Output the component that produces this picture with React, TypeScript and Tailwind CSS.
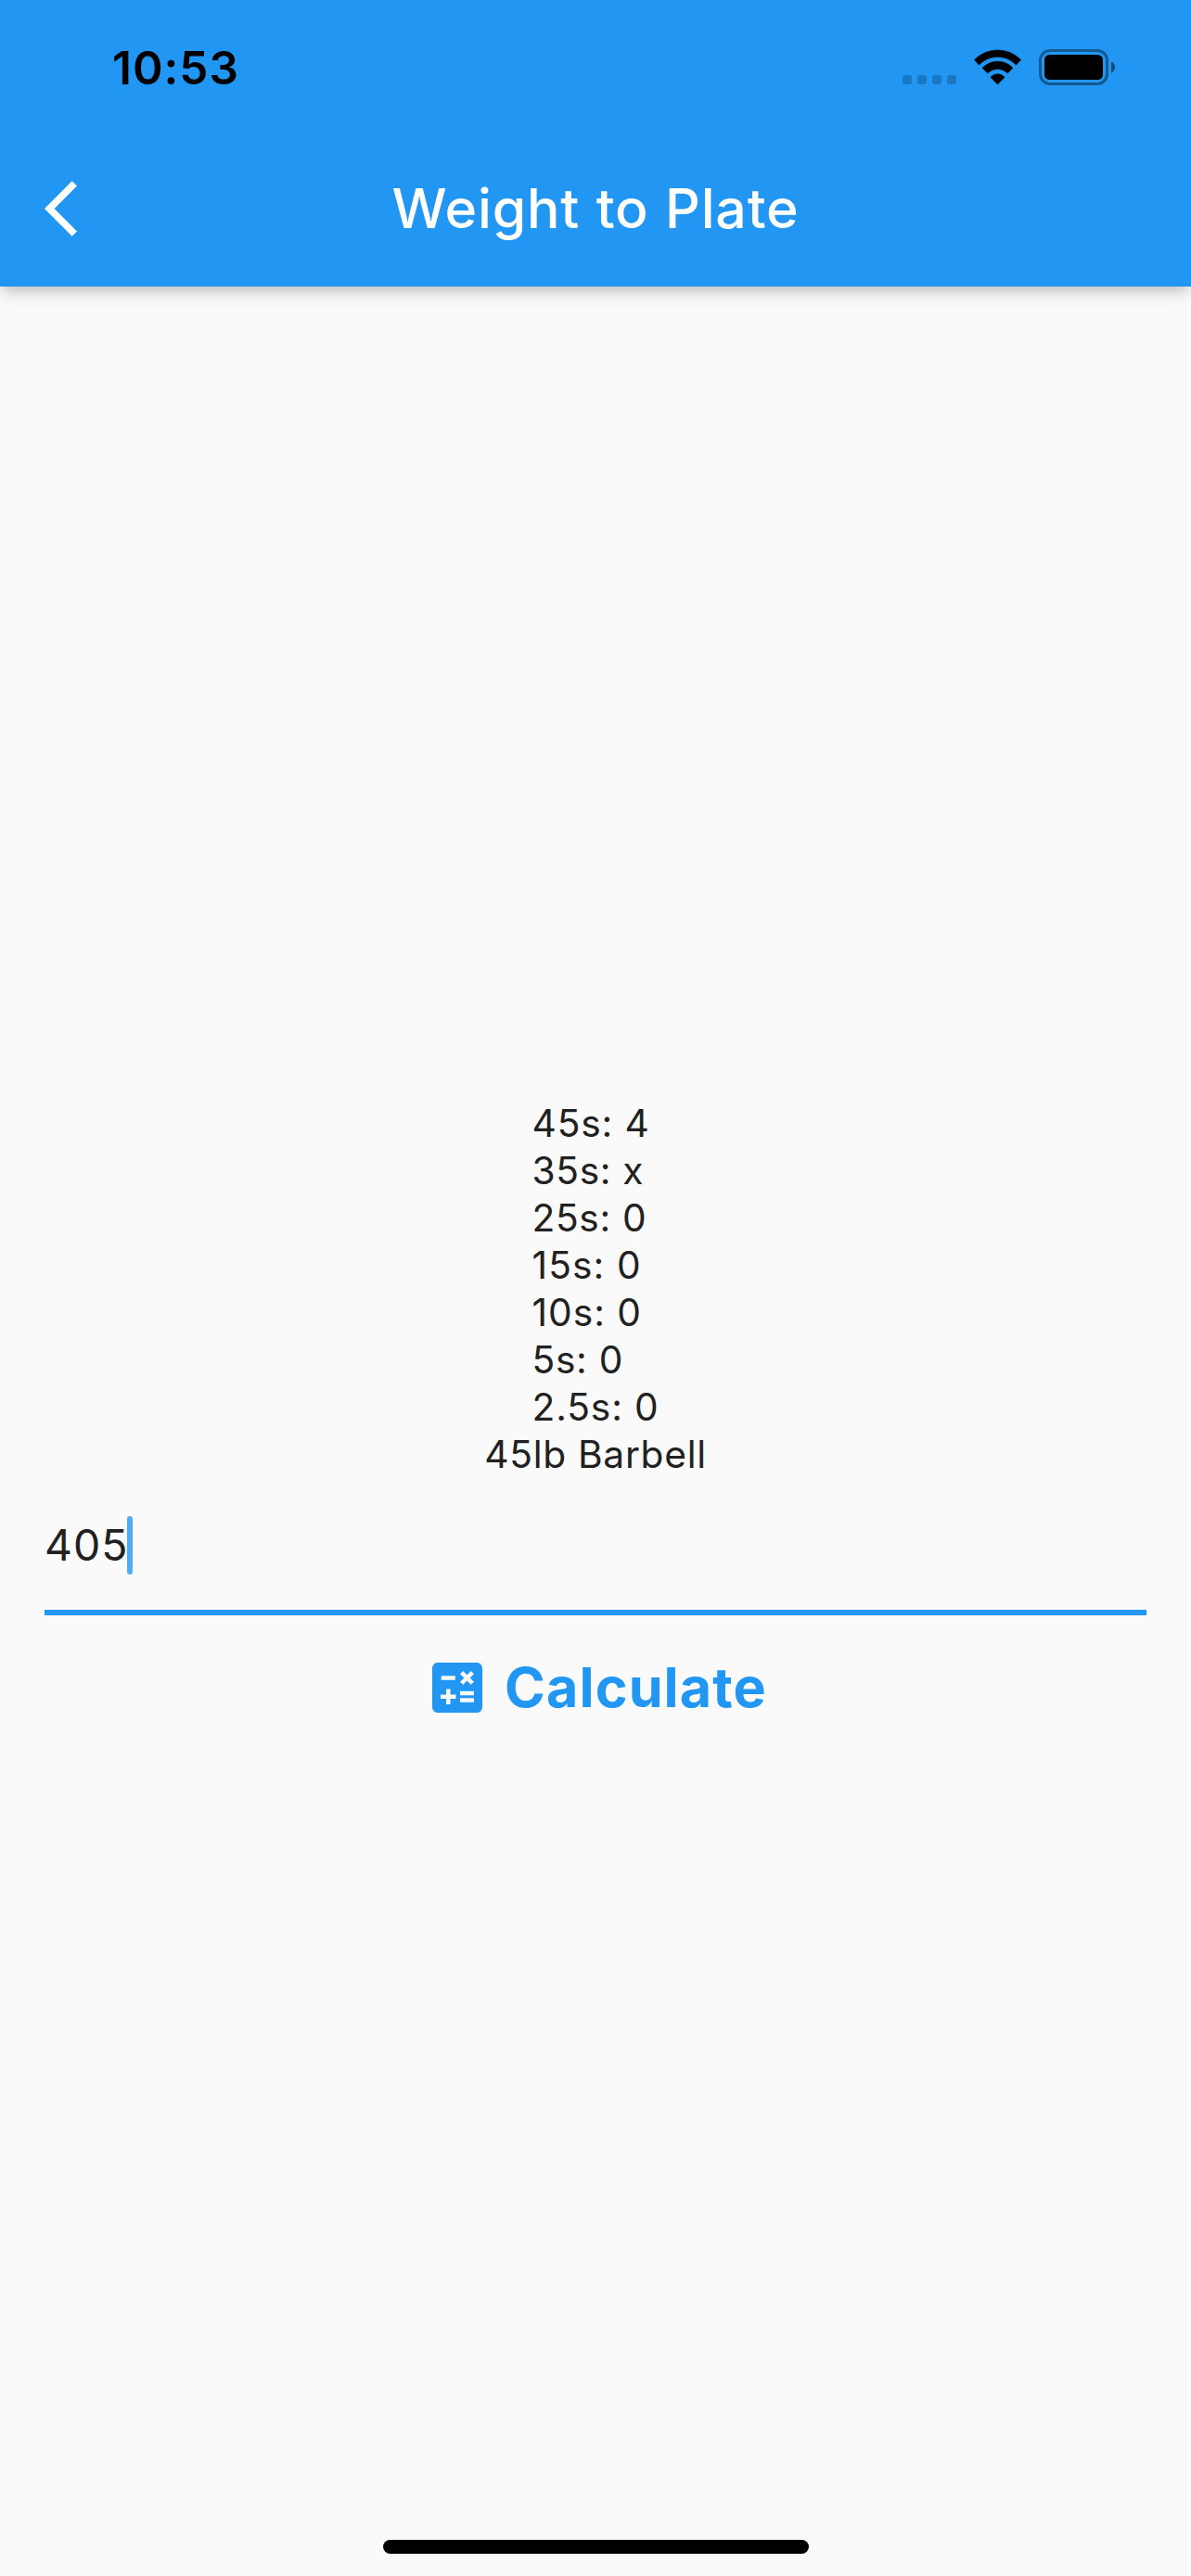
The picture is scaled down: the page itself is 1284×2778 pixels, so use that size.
import { MdCalculate } from "react-icons/md";

const plates = [
  { text: "45s: 4", className: "tracking-[0.86px]" },
  { text: "35s: x", className: "tracking-[0.65px]" },
  { text: "25s: 0", className: "tracking-[0.66px]" },
  { text: "15s: 0", className: "tracking-[1.1px]" },
  { text: "10s: 0", className: "tracking-[1px]" },
  { text: "5s: 0", className: "tracking-[0.7px]" },
  { text: "2.5s: 0", className: "tracking-[0.87px]" },
];

function StatusBar() {
  return (
    <div className="flex h-[141px] items-start justify-between pl-[121px] pr-[81px] text-black">
      <div className="mt-[43px] text-[49.5px] leading-[60px] font-semibold tracking-[1px]">10:53</div>
      <div className="mt-[53px] flex h-[39px]">
        <div className="mt-[28px] mr-[19px] flex gap-[6px]">
          {[0, 1, 2, 3].map((i) => (
            <span key={i} className="size-[10px] rounded-[3px] bg-black/20" />
          ))}
        </div>
        <svg className="mr-[18px] h-[39px] w-[52px]" viewBox="0 0 52 39">
          <path d="M0.4 11.5A35 35 0 0 1 50.6 11.5L45.5 17A27.5 27.5 0 0 0 5.5 17Z" stroke="#000" strokeWidth="0.6" strokeLinejoin="round" />
          <path d="M9 20.3A22.7 22.7 0 0 1 42 20.3L36.3 25.9A15.2 15.2 0 0 0 14.7 25.9Z" stroke="#000" strokeWidth="0.6" strokeLinejoin="round" />
          <path d="M17.9 30.3A10 10 0 0 1 33.1 30.3L25.5 38Z" stroke="#000" strokeWidth="0.6" strokeLinejoin="round" />
        </svg>
        <svg className="h-[39px] w-[83px]" viewBox="0 0 83 39">
          <rect x="1.5" y="1.5" width="72" height="36" rx="10.5" fill="none" stroke="#000" strokeOpacity="0.4" strokeWidth="3" />
          <rect x="6" y="6" width="63" height="27" rx="5.5" />
          <path d="M78 13.5C80.5 14.5 82 16.8 82 19.5S80.5 24.5 78 25.5Z" fillOpacity="0.5" />
        </svg>
      </div>
    </div>
  );
}

function AppBar() {
  return (
    <div className="grid h-[168px] grid-cols-[168px_1fr_168px] items-center">
      <svg className="ml-[48px] size-[72px] fill-white" viewBox="0 0 24 24">
        <path d="M11.67 3.87L9.9 2.1 0 12l9.9 9.9 1.77-1.77L3.54 12z" />
      </svg>
      <h1 className="text-center text-[59px] leading-[72px] font-medium tracking-[0.8px] text-white [word-spacing:1px]">
        Weight to Plate
      </h1>
    </div>
  );
}

export default function App() {
  return (
    <div className="flex h-[2778px] w-[1284px] flex-col bg-[#fafafa] font-[Inter,sans-serif] text-[#212121]">
      <header className="relative bg-[#2196f3] shadow-[0_6px_12px_-3px_rgba(0,0,0,0.14),0_10px_18px_-3px_rgba(0,0,0,0.13)]">
        <StatusBar />
        <AppBar />
      </header>

      <main className="flex grow flex-col items-center px-12 pt-[877px]">
        <ul className="w-[137px] text-[40.7px] leading-[51px] whitespace-nowrap">
          {plates.map((p) => (
            <li key={p.text} className={p.className}>{p.text}</li>
          ))}
        </ul>
        <p className="text-[40.7px] leading-[51px] tracking-[0.72px]">45lb Barbell</p>
        <div className="flex h-[148px] w-full items-start border-b-[6px] border-[#2196f3] pt-[41px]">
          <span className="mt-px w-[89px] text-[46.4px] leading-[60px] tracking-[1.05px]">405</span>
          <span className="h-[63px] w-[6px] rounded-[3px] bg-[#4eacf8]" />
        </div>
        <button className="mt-[42px] flex items-center gap-[15px] text-[#2196f3]">
          <MdCalculate className="size-[72px]" />
          <span className="-mt-px text-[59.2px] leading-[72px] font-bold tracking-[1.15px]">Calculate</span>
        </button>
      </main>

      <div className="mb-[24px] h-[15px] w-[459px] self-center rounded-full bg-black" />
    </div>
  );
}
